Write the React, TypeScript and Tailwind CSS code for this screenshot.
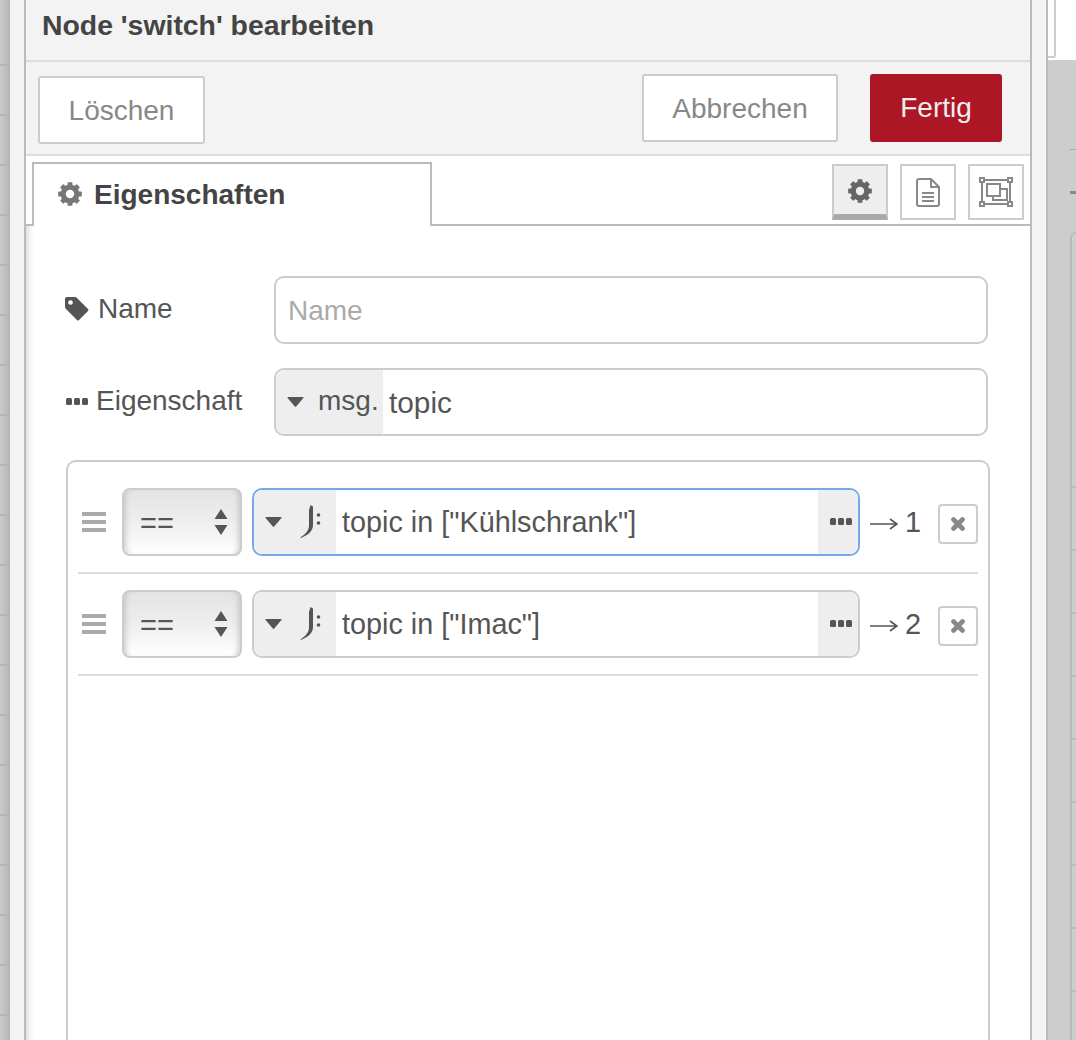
const LEFT_LINES = Array.from({ length: 20 });
const RIGHT_LINES = Array.from({ length: 9 });
const COG_TEETH = [0, 45, 90, 135, 180, 225, 270, 315];

const RULES = [
  { text: 'topic in ["Kühlschrank"]', output: "1", focused: true },
  { text: 'topic in ["Imac"]', output: "2", focused: false },
];

function CogIcon({ color }: { color: string }) {
  return (
    <svg width="24" height="24" viewBox="0 0 24 24" fill={color}>
      <circle cx="12" cy="12" r="6.8" fill="none" stroke={color} strokeWidth="5.2" />
      {COG_TEETH.map((deg) => (
        <rect key={deg} x="9.6" y="0.2" width="4.8" height="5" rx="0.6" transform={`rotate(${deg} 12 12)`} />
      ))}
    </svg>
  );
}

function TagIcon() {
  return (
    <svg width="24" height="24" viewBox="0 0 24 24" fill="#555">
      <path
        fillRule="evenodd"
        d="M0 2Q0 0 2 0H10Q11 0 12 1L23 12Q24 13 23 14L14 23Q13 24 12 23L1 12Q0 11 0 10ZM5.5 3.2a2.3 2.3 0 1 0 .01 0Z"
      />
    </svg>
  );
}

function DotsIcon() {
  return (
    <svg width="22" height="7" viewBox="0 0 22 7" fill="#555">
      <rect x="0" y="0" width="6" height="7" rx="1.5" />
      <rect x="8" y="0" width="6" height="7" rx="1.5" />
      <rect x="16" y="0" width="6" height="7" rx="1.5" />
    </svg>
  );
}

function CaretIcon() {
  return (
    <svg width="17" height="10" viewBox="0 0 17 10" fill="#555">
      <path d="M1 0h15q1 0 .4 1L9.2 9.4q-.7.8-1.4 0L.6 1Q0 0 1 0z" />
    </svg>
  );
}

function FileIcon() {
  return (
    <svg width="24" height="29" viewBox="0 0 24 29" fill="none" stroke="#888" strokeWidth="2">
      <path d="M3 1h12l8 8v17q0 2-2 2H3q-2 0-2-2V3q0-2 2-2z" />
      <path d="M15 1v8h8" />
      <path d="M6 15h12M6 19h12M6 23h12" />
    </svg>
  );
}

function GroupIcon() {
  return (
    <svg width="34" height="30" viewBox="0 0 34 30" fill="none" stroke="#888" strokeWidth="2">
      <path d="M5 3h24M5 27h24M3 5v20M31 5v20" />
      <rect x="1" y="1" width="4" height="4" />
      <rect x="29" y="1" width="4" height="4" />
      <rect x="1" y="25" width="4" height="4" />
      <rect x="29" y="25" width="4" height="4" />
      <rect x="8" y="7" width="13" height="12" />
      <path d="M21 12h7v11H14v-4" />
    </svg>
  );
}

function JsonataIcon() {
  return (
    <svg width="22" height="34" viewBox="0 0 22 34" fill="#555">
      <path d="M10.500 0L13 1.500V20C13 26 8 30 1 33L.5 32.200C5 29.500 9 26 9 20V5z" />
      <circle cx="18.500" cy="10" r="1.8" />
      <circle cx="18.500" cy="18" r="1.8" />
    </svg>
  );
}

function SelectArrows() {
  return (
    <svg width="14" height="26" viewBox="0 0 14 26" fill="#555">
      <path d="M7 0l6.5 10H.5zM7 26L.5 16h13z" />
    </svg>
  );
}

function CloseIcon() {
  return (
    <svg width="14" height="14" viewBox="0 0 14 14" fill="none" stroke="#888" strokeWidth="4.6" strokeLinecap="round">
      <path d="M2.500 2.500l9 9M11.500 2.500l-9 9" />
    </svg>
  );
}

function RuleRow({ text, output, focused }: { text: string; output: string; focused: boolean }) {
  return (
    <div className="flex items-center h-[102px] pt-[16px] pb-[16px] border-b-2 border-[#ddd]">
      <div className="w-[24px] ml-[4px] flex flex-col gap-[4px]">
        <div className="h-[4px] bg-[#aaa]" />
        <div className="h-[4px] bg-[#aaa]" />
        <div className="h-[4px] bg-[#aaa]" />
      </div>
      <div className="ml-[16px] w-[120px] h-[68px] rounded-[8px] border-2 border-[#ccc] bg-gradient-to-b from-[#e4e4e4] via-[#eeeeee] to-white shadow-[inset_6px_0_6px_-5px_#c0c0c0,inset_-6px_0_6px_-5px_#c0c0c0] flex items-center justify-between pl-[16px] pr-[12px]">
        <span className="text-[29px] leading-none text-[#555] mt-[2px]">==</span>
        <SelectArrows />
      </div>
      <div className={`ml-[10px] w-[608px] h-[68px] rounded-[10px] border-2 overflow-hidden flex items-stretch ${focused ? "border-[#74a9e6]" : "border-[#ccc]"}`}>
        <div className="w-[82px] bg-[#eee] flex items-center pl-[11px] gap-[18px]">
          <CaretIcon />
          <JsonataIcon />
        </div>
        <div className="flex-1 flex items-center pl-[6px] pt-[2px] text-[28.800px] text-[#555]">{text}</div>
        <div className="w-[40px] bg-[#eee] flex items-center pl-[12px] pb-[2px]">
          <DotsIcon />
        </div>
      </div>
      <div className="ml-[10px] w-[68px] flex items-center text-[28px] text-[#555] whitespace-nowrap">
        <svg width="28" height="16" viewBox="0 0 28 16" fill="none" stroke="#555" strokeWidth="1.6" className="mt-[3px]">
          <path d="M0 8h27M20 3l7 5-7 5" />
        </svg>
        <span className="ml-[7px] text-[29px] mt-[1px]">{output}</span>
      </div>
      <div className="w-[40px] h-[40px] rounded-[4px] border-2 border-[#ccc] flex items-center justify-center mt-[4px]">
        <CloseIcon />
      </div>
    </div>
  );
}

export default function App() {
  return (
    <div className="flex h-[1040px] w-[1076px] overflow-hidden bg-[#f3f3f3] font-['Liberation_Sans',Arial,sans-serif]">
      {/* canvas behind the tray */}
      <div className="w-[10px] h-full bg-gradient-to-r from-[#cccccc] to-[#b4b4b4] pt-[16px]">
        {LEFT_LINES.map((_, i) => (
          <div key={i} className="h-[50px] border-b-2 border-[#b4b4b4]" />
        ))}
      </div>
      <div className="w-[14px] h-full bg-[#f3f3f3]" />

      {/* tray */}
      <div className="w-[1008px] h-full border-x-2 border-[#bbb] flex flex-col bg-white">
        <div className="h-[62px] shrink-0 bg-[#f3f3f3] border-b-2 border-[#ddd] pl-[16px] pb-[10px] flex items-center">
          <span className="text-[28.4px] font-bold text-[#444]">Node 'switch' bearbeiten</span>
        </div>

        <div className="h-[94px] shrink-0 bg-[#f3f3f3] border-b-2 border-[#ddd] flex items-start pl-[12px] pr-[28px] pt-[12px]">
          <button className="mt-[2px] w-[167px] h-[68px] bg-white rounded-[3px] border-2 border-[#ccc] pt-[2px] text-[28px] text-[#888]">
            Löschen
          </button>
          <button className="ml-auto w-[196px] h-[68px] bg-white rounded-[3px] border-2 border-[#ccc] pt-[2px] text-[28px] text-[#888]">
            Abbrechen
          </button>
          <button className="ml-[32px] w-[132px] h-[68px] bg-[#ad1625] rounded-[3px] text-[28px] text-[#eee]">
            Fertig
          </button>
        </div>

        <div className="h-[70px] shrink-0 border-b-2 border-[#bbb] flex items-start pl-[6px] pr-[6px] pt-[6px] bg-white">
          <div className="w-[400px] h-[64px] -mb-[2px] bg-white border-2 border-b-0 border-[#bbb] flex items-center pl-[24px] gap-[12px] relative">
            <div className="mb-[2px]">
              <CogIcon color="#777" />
            </div>
            <span className="text-[28px] font-bold text-[#444]">Eigenschaften</span>
          </div>
          <div className="ml-auto flex gap-[12px] mt-[2px]">
            <div className="w-[56px] h-[56px] bg-[#eee] border-2 border-b-[6px] border-[#ccc] border-b-[#aaa] flex items-center justify-center">
              <div className="mt-[2px]">
                <CogIcon color="#666" />
              </div>
            </div>
            <div className="w-[56px] h-[56px] border-2 border-[#ccc] flex items-center justify-center">
              <FileIcon />
            </div>
            <div className="w-[56px] h-[56px] border-2 border-[#ccc] flex items-center justify-center">
              <GroupIcon />
            </div>
          </div>
        </div>

        <div className="flex-1 pt-[50px] pl-[38px] pr-[40px] shadow-[inset_10px_0_8px_-9px_#ccc]">
          <div className="flex items-center h-[68px]">
            <div className="w-[210px] flex items-center gap-[9px] text-[28px] text-[#555] pl-[1px] pb-[2px]">
              <TagIcon />
              <span>Name</span>
            </div>
            <input
              placeholder="Name"
              className="w-[714px] h-[68px] rounded-[10px] border-2 border-[#ccc] pl-[12px] pr-[12px] pt-[2px] text-[28px] text-[#555] placeholder:text-[#aaa] bg-white"
            />
          </div>

          <div className="flex items-center h-[68px] mt-[24px]">
            <div className="w-[210px] flex items-center gap-[8px] text-[28px] text-[#555] pl-[2px] pb-[2px]">
              <DotsIcon />
              <span>Eigenschaft</span>
            </div>
            <div className="w-[714px] h-[68px] rounded-[10px] border-2 border-[#ccc] overflow-hidden flex items-stretch">
              <div className="w-[107px] bg-[#eee] flex items-center pl-[11px] gap-[14px]">
                <CaretIcon />
                <span className="text-[28px] leading-none text-[#555] pb-[2px]">msg.</span>
              </div>
              <div className="flex-1 flex items-center pl-[6px] pt-[2px] text-[29.800px] text-[#555]">topic</div>
            </div>
          </div>

          <div className="mt-[24px] ml-[2px] w-[924px] h-[640px] rounded-t-[10px] border-2 border-[#ccc] px-[10px] pt-[10px]">
            {RULES.map((r) => (
              <RuleRow key={r.output} text={r.text} output={r.output} focused={r.focused} />
            ))}
          </div>
        </div>
      </div>

      <div className="w-[14px] h-full bg-[#f3f3f3]" />

      {/* sidebar behind the tray */}
      <div className="w-[30px] h-full border-l-2 border-[#bbb] bg-[#cdcdcd] flex flex-col">
        <div className="h-[60px] shrink-0 bg-white">
          <div className="w-[8px] h-[58px] border-r-2 border-b-2 border-[#ccc] rounded-br-[3px]" />
        </div>
        <div className="h-[90px] shrink-0 border-b border-[#aaa] ml-[22px]" />
        <div className="h-[3px] mt-[41px] w-[6px] bg-[#888] ml-[22px] shrink-0" />
        <div className="flex-1 mt-[38px] ml-[22px] border-l-2 border-t-2 border-[#bbb] rounded-tl-[8px] pt-[252px]">
          {RIGHT_LINES.map((_, i) => (
            <div key={i} className="h-[63px] border-t-2 border-[#bbb]" />
          ))}
        </div>
      </div>
    </div>
  );
}
